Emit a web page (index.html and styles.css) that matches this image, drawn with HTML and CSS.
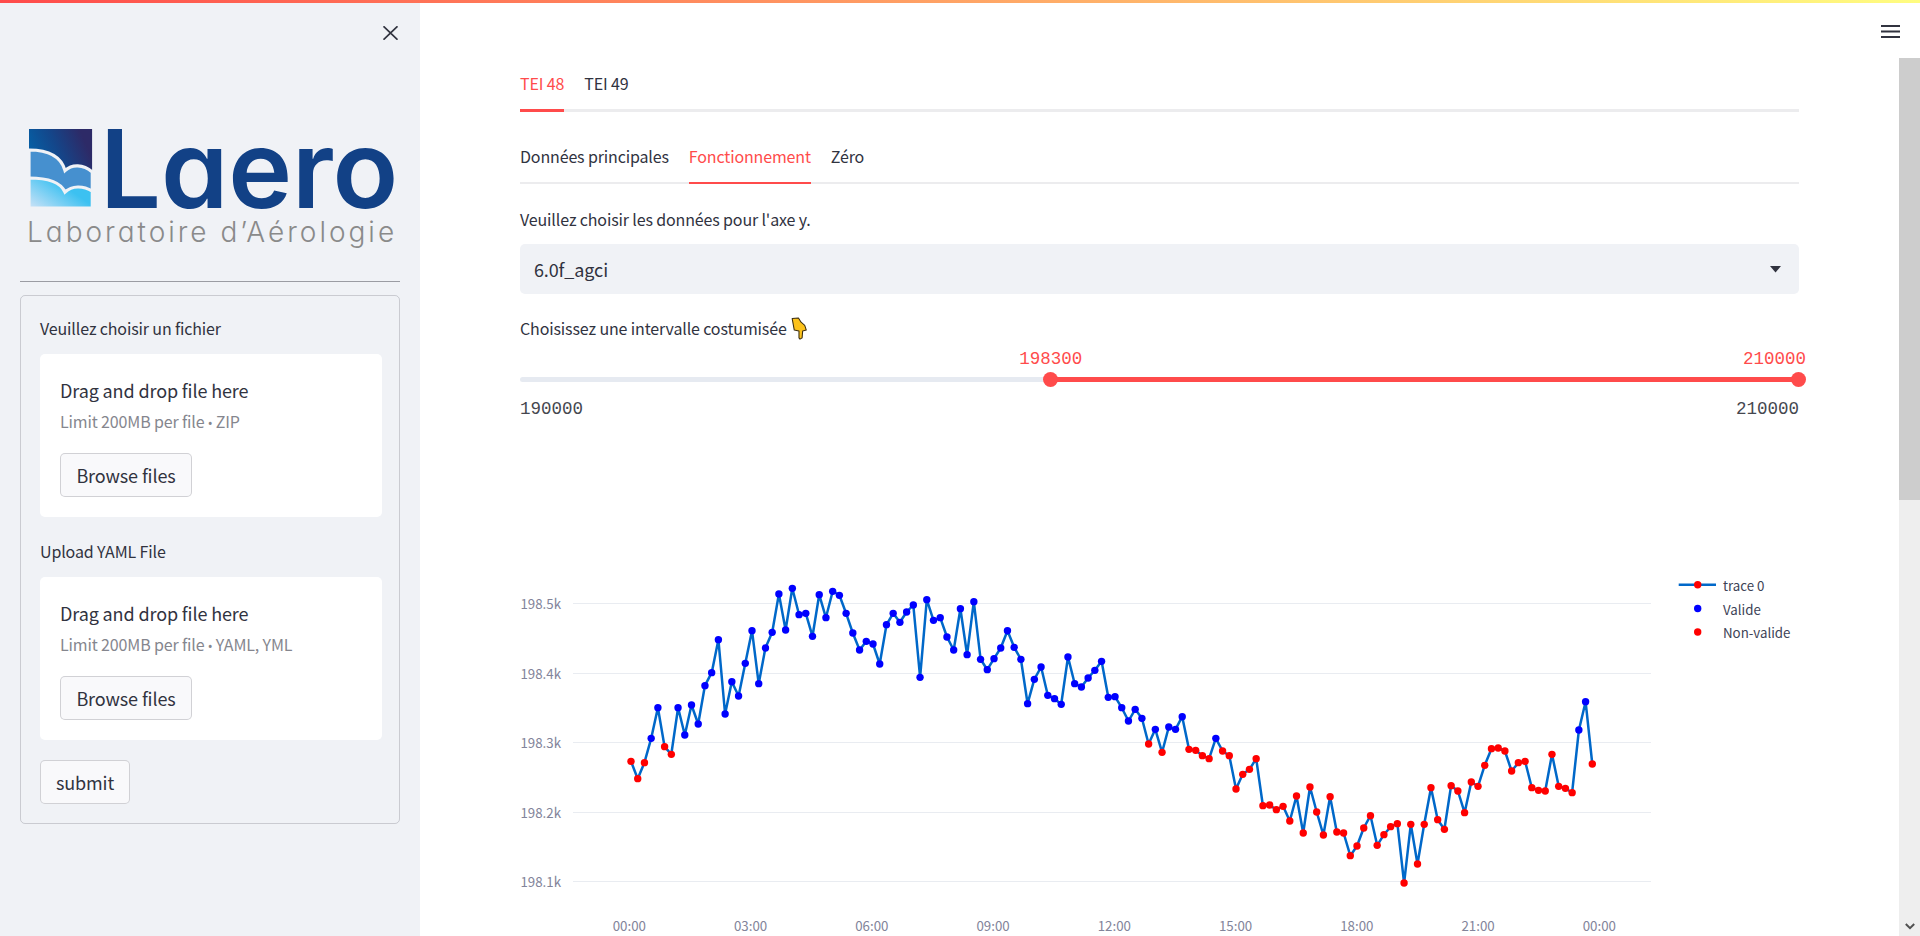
FILE: index.html
```html
<!DOCTYPE html>
<html lang="fr">
<head>
<meta charset="utf-8">
<title>Laero</title>
<link rel="stylesheet" href="styles.css">
</head>
<body>
<div class="decoration"></div>
<aside class="sidebar">
  <div class="sidebar-head">
    <svg class="close" viewBox="0 0 15 14" width="15" height="14"><path d="M.5.3 14.500 13.700M14.500.3.5 13.700"/></svg>
  </div>
  <svg class="logo" viewBox="20 90 380 182" width="380" height="182">
    <defs>
      <linearGradient id="gDark" x1="0" y1="0.55" x2="0.85" y2="0.1">
        <stop offset="0" stop-color="#0068ae"/>
        <stop offset="0.55" stop-color="#14468a"/>
        <stop offset="1" stop-color="#2d2a67"/>
      </linearGradient>
      <linearGradient id="gLight" x1="0" y1="1" x2="0.8" y2="0.45">
        <stop offset="0" stop-color="#cfe3f7"/>
        <stop offset="0.9" stop-color="#3cc1f1"/>
      </linearGradient>
    </defs>
    <g transform="translate(29 129)">
      <rect width="63.3" height="79" fill="url(#gDark)"/>
      <path d="M0 21C20 21 32 27 36 41.5 43 35 54 35 63.3 43V62H0Z" fill="#4690cf" stroke="#f0f2f6" stroke-width="3.2"/>
      <path d="M0 49C20 49 32 54 36 63 43 56.500 54 56.500 63.300 62V79H0Z" fill="url(#gLight)" stroke="#f0f2f6" stroke-width="3.2"/>
      <path d="M-3-3H66V0H-3ZM-3 79H66V82H-3ZM-3 0H0V79H-3ZM63.300 0H66V79H63.300Z" fill="#f0f2f6"/>
    </g>
    <text class="logo-word" x="100" y="208" textLength="298">Laero</text>
    <text class="logo-sub" x="27" y="241.500" textLength="367">Laboratoire d’Aérologie</text>
  </svg>
  <hr class="rule">
  <form class="upload-form">
    <div class="label">Veuillez choisir un fichier</div>
    <section class="dropzone">
      <div class="drop-title">Drag and drop file here</div>
      <div class="drop-limit">Limit 200MB per file<span class="sep"> • </span>ZIP</div>
      <button class="btn btn-browse" type="button">Browse files</button>
    </section>
    <div class="label label-second">Upload YAML File</div>
    <section class="dropzone">
      <div class="drop-title">Drag and drop file here</div>
      <div class="drop-limit">Limit 200MB per file<span class="sep"> • </span>YAML, YML</div>
      <button class="btn btn-browse" type="button">Browse files</button>
    </section>
    <button class="btn btn-submit" type="button">submit</button>
  </form>
</aside>

<main class="main">
  <nav class="tabs">
    <div class="tab active">TEI 48</div>
    <div class="tab">TEI 49</div>
  </nav>
  <nav class="subtabs">
    <div class="subtab">Données principales</div>
    <div class="subtab active">Fonctionnement</div>
    <div class="subtab">Zéro</div>
  </nav>
  <div class="field-label">Veuillez choisir les données pour l'axe y.</div>
  <div class="select">
    <span>6.0f_agci</span>
    <svg class="caret" viewBox="0 0 11 7" width="11" height="7"><path d="M0 0H11L5.500 6.500Z"/></svg>
  </div>
  <div class="field-label field-label-second">
    <span>Choisissez une intervalle costumisée</span>
    <svg class="hand" viewBox="0 0 16 22" width="17" height="23"><path d="M1 1.500 7 1 9.500 5 13 8 14.500 12.500 11 13.500 10.500 20 8.500 21.200 7.500 20 7.500 13.500 3 12.500Z"/></svg>
  </div>
  <div class="slider">
    <div class="track"><div class="track-fill" style="left:41.5%"></div></div>
    <div class="thumb" style="left:41.5%"><span class="thumb-value">198300</span></div>
    <div class="thumb thumb-end" style="left:100%"><span class="thumb-value">210000</span></div>
    <div class="range"><span>190000</span><span>210000</span></div>
  </div>
  <svg id="chart" class="chart" viewBox="520 560 1280 376" width="1280" height="376"></svg>
</main>

<header class="topbar">
  <svg class="menu" viewBox="0 0 19 13" width="19" height="13"><path d="M0 1H19M0 6.500H19M0 12H19"/></svg>
</header>
<div class="scrollbar">
  <div class="scroll-thumb"></div>
  <svg class="scroll-arrow" viewBox="0 0 10 7" width="10" height="7"><path d="M.8 1 5 5.200 9.200 1"/></svg>
</div>
<script src="chart.js"></script>
</body>
</html>
```

FILE: styles.css
```css
* { box-sizing: border-box; }
html, body { margin: 0; height: 100%; }
body {
  display: flex;
  height: 936px;
  overflow: hidden;
  background: #fff;
  color: #31333f;
  font-family: "Noto Sans CJK SC", "Source Sans Pro", "Lato", sans-serif;
  font-size: 16px;
  letter-spacing: -0.14px;
}
.decoration {
  position: fixed;
  top: 0; left: 0; right: 0;
  height: 3px;
  z-index: 5;
  background: linear-gradient(90deg, #ff4b4b, #fffd80);
}
.sidebar {
  flex: 0 0 420px;
  height: 936px;
  padding: 0 20px;
  background: #f0f2f6;
}
.sidebar-head {
  height: 90px;
  padding: 26px 2px 0 0;
  display: flex;
  justify-content: flex-end;
  align-items: flex-start;
}
.close path { fill: none; stroke: #31333f; stroke-width: 1.7; }
.logo { display: block; }
.logo-word {
  font-family: "Inter", sans-serif;
  font-weight: 600;
  font-size: 108px;
  font-feature-settings: "cv11";
  fill: #124186;
}
.logo-sub {
  font-family: "Inter", sans-serif;
  font-weight: 300;
  font-size: 28px;
  font-feature-settings: "cv11";
  fill: #8a8a8a;
}
.rule { margin: 9px 0 0; border: 0; height: 1px; background: #9b9ca3; }
.upload-form {
  margin-top: 13px;
  height: 529px;
  padding: 20px 17px 0 19px;
  border: 1px solid rgba(49, 51, 63, .2);
  border-radius: 5px;
}
.label { line-height: 24px; }
.label-second { margin-top: 22px; }
.dropzone {
  margin-top: 14px;
  height: 163px;
  padding: 22px 20px 0;
  background: #fff;
  border-radius: 5px;
}
.drop-title { font-size: 18px; line-height: 28px; letter-spacing: -0.12px; }
.drop-limit { margin-top: 6px; height: 22px; font-size: 16px; line-height: 22px; color: #85868e; }
.sep { font-family: "Noto Sans", sans-serif; font-size: 13px; }
.btn {
  display: block;
  height: 44px;
  padding: 0;
  background: #f9f9fb;
  color: #31333f;
  border: 1px solid rgba(49, 51, 63, .2);
  border-radius: 5px;
  font: inherit;
  font-size: 18px;
  letter-spacing: -0.12px;
  line-height: 40px;
}
.btn-browse { width: 132px; margin-top: 21px; }
.btn-submit { width: 90px; margin-top: 20px; }

.main {
  flex: 1;
  height: 936px;
  padding: 60px 121px 0 100px;
  overflow: hidden;
}
.tabs {
  display: flex;
  gap: 20px;
  border-bottom: 3px solid #ececee;
}
.tab {
  height: 52px;
  line-height: 47px;
  margin-bottom: -3px;
  border-bottom: 3px solid transparent;
}
.tab.active, .subtab.active { color: #ff4b4b; border-bottom-color: #ff4b4b; }
.subtabs {
  display: flex;
  gap: 20px;
  margin-top: 20px;
  border-bottom: 2px solid #ececee;
}
.subtab {
  height: 52px;
  line-height: 49px;
  margin-bottom: -2px;
  border-bottom: 2px solid transparent;
}
.field-label {
  display: flex;
  align-items: center;
  gap: 4px;
  margin-top: 23px;
  height: 24px;
  line-height: 24px;
}
.field-label-second { margin-top: 22px; }
.select {
  display: flex;
  align-items: center;
  justify-content: space-between;
  margin-top: 13px;
  height: 50px;
  padding: 0 18px 0 14px;
  background: #f0f2f6;
  border-radius: 5px;
  font-size: 18px;
  letter-spacing: -0.12px;
}
.caret path { fill: #31333f; }
.hand path { fill: #fcc21b; stroke: #3a2c10; stroke-width: 1; stroke-linejoin: round; }
.slider { position: relative; margin-top: 37px; letter-spacing: 0; }
.track { position: relative; height: 5px; background: #e6eaf1; border-radius: 3px; }
.track-fill { position: absolute; top: 0; right: 0; bottom: 0; background: #ff4b4b; }
.thumb {
  position: absolute;
  top: -5px;
  width: 15px;
  height: 15px;
  margin-left: -7.5px;
  background: #ff4b4b;
  border-radius: 50%;
}
.thumb-end { margin-left: -8px; }
.thumb-value {
  position: absolute;
  bottom: 18px;
  left: 50%;
  transform: translateX(-50%);
  color: #ff4b4b;
  font-family: "Liberation Mono", monospace;
  font-size: 17.500px;
  line-height: 20px;
}
.thumb-end .thumb-value { left: auto; right: 0; transform: none; }
.range {
  display: flex;
  justify-content: space-between;
  margin-top: 17px;
  color: #45474f;
  font-family: "Liberation Mono", monospace;
  font-size: 17.5px;
  line-height: 20px;
}
.chart { display: block; margin-top: 141px; letter-spacing: 0; }
.grid { stroke: #e9ecf1; stroke-width: 1; }
.axis-text {
  font-family: "Noto Sans CJK SC", sans-serif;
  font-size: 13.3px;
  fill: #82849a;
}
.legend-text {
  font-family: "Noto Sans CJK SC", sans-serif;
  font-size: 13.3px;
  fill: #3d4356;
}
.series { fill: none; stroke: #0068c9; stroke-width: 2.5; stroke-linejoin: round; }
.topbar {
  position: fixed;
  top: 3px; right: 0;
  width: 60px;
  height: 55px;
  padding: 22px 20px 0 21px;
  background: #fff;
}
.menu { display: block; }
.menu path { fill: none; stroke: #31333f; stroke-width: 2; }
.scrollbar {
  position: fixed;
  top: 58px; right: 0; bottom: 0;
  width: 21px;
  background: #eeeeee;
}
.scroll-thumb { height: 442px; background: #cdcdcd; }
.scroll-arrow { position: absolute; left: 5.5px; bottom: 6px; }
.scroll-arrow path { fill: none; stroke: #505050; stroke-width: 2; }
```

FILE: chart.js
```js
// y values read from the plot, in thirds of a pixel above the 570px line; r marks Non-valide points.
var pts = "574r 626r 578r 505 413 530r 553r 413 495 405 462 347 308 209 432 335 378 280 182 341 234 187 72 180 55 134 130 199 74 143 64 76 130 189 240 214 222 282 164 130 157 126 105 322 89 151 143 201 240 116 254 95 268 299 266 234 182 232 268 401 328 291 376 386 403 261 341 351 324 301 274 382 380 413 453 418 445 522r 478 547r 471 478 440 538r 541r 557r 566r 505 543r 557r 657r 613r 598r 566r 707r 705r 719r 709r 753r 678r 789r 651r 726r 795r 680r 786r 789r 857r 828r 774r 737r 826r 794r 770r 761r 939r 763r 882r 763r 653r 749r 778r 647r 663r 728r 636r 649r 586r 536r 534r 543r 603r 578r 574r 653r 661r 663r 553r 649r 655r 668r 480 395 582r".split(" ");
var NS = "http://www.w3.org/2000/svg";
var chart = document.getElementById("chart");
function el(name, attrs, text) {
  var n = document.createElementNS(NS, name);
  for (var k in attrs) n.setAttribute(k, attrs[k]);
  if (text) n.textContent = text;
  chart.appendChild(n);
  return n;
}
[[603.5, "198.5k"], [673.5, "198.4k"], [742.5, "198.3k"], [812.5, "198.2k"], [881.5, "198.1k"]].forEach(function (g) {
  el("line", { "class": "grid", x1: 573, x2: 1651, y1: g[0], y2: g[0] });
  el("text", { "class": "axis-text", x: 561, y: g[0] + 5, "text-anchor": "end" }, g[1]);
});
["00:00", "03:00", "06:00", "09:00", "12:00", "15:00", "18:00", "21:00", "00:00"].forEach(function (t, i) {
  el("text", { "class": "axis-text", x: 629.3 + i * 121.25, y: 931, "text-anchor": "middle" }, t);
});
var step = 961.3 / (pts.length - 1);
var coords = pts.map(function (p, i) {
  return { x: 631 + i * step, y: parseFloat(p) / 3 + 570, red: p.slice(-1) === "r" };
});
el("polyline", { "class": "series", points: coords.map(function (c) { return c.x.toFixed(1) + "," + c.y.toFixed(1); }).join(" ") });
coords.forEach(function (c) {
  el("circle", { cx: c.x, cy: c.y, r: 3.7, fill: c.red ? "#ff0000" : "#0000ff" });
});
el("line", { "class": "series", x1: 1678.7, x2: 1716, y1: 584.7, y2: 584.7 });
el("circle", { cx: 1697.7, cy: 584.7, r: 3.7, fill: "#ff0000" });
el("circle", { cx: 1697.7, cy: 608.5, r: 3.7, fill: "#0000ff" });
el("circle", { cx: 1697.7, cy: 632, r: 3.7, fill: "#ff0000" });
el("text", { "class": "legend-text", x: 1723, y: 591 }, "trace 0");
el("text", { "class": "legend-text", x: 1723, y: 615 }, "Valide");
el("text", { "class": "legend-text", x: 1723, y: 638 }, "Non-valide");
```
